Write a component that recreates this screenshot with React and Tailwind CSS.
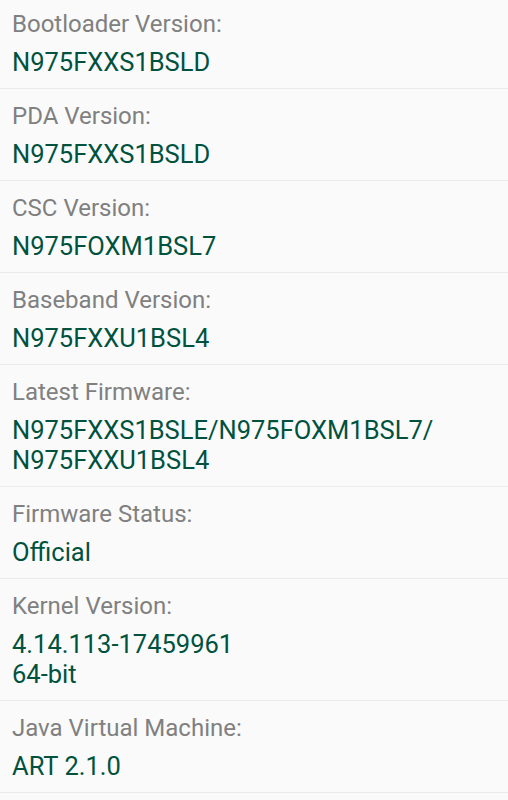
const rows = [
  { label: 'Bootloader Version:', value: ['N975FXXS1BSLD'] },
  { label: 'PDA Version:', value: ['N975FXXS1BSLD'] },
  { label: 'CSC Version:', value: ['N975FOXM1BSL7'] },
  { label: 'Baseband Version:', value: ['N975FXXU1BSL4'] },
  { label: 'Latest Firmware:', value: ['N975FXXS1BSLE/N975FOXM1BSL7/', 'N975FXXU1BSL4'] },
  { label: 'Firmware Status:', value: ['Official'] },
  { label: 'Kernel Version:', value: ['4.14.113-17459961', '64-bit'] },
  { label: 'Java Virtual Machine:', value: ['ART 2.1.0'] },
];

export default function App() {
  return (
    <div
      className="w-[508px] h-[800px] overflow-hidden bg-[#fafafa]"
      style={{ fontFamily: 'Roboto, "Noto Sans", sans-serif' }}
    >
      <div className="-mt-[3px]">
        {rows.map((row) => (
          <div key={row.label} className="border-b border-[#ebebeb] pl-3 pr-4 pt-[13px] pb-[11px]">
            <div className="text-[24px] leading-7 text-[#808080]">{row.label}</div>
            <div className="mt-[9px] text-[25.5px] leading-[30px] text-[#00523f]">
              {row.value.map((v) => (
                <div key={v}>{v}</div>
              ))}
            </div>
          </div>
        ))}
      </div>
    </div>
  );
}
